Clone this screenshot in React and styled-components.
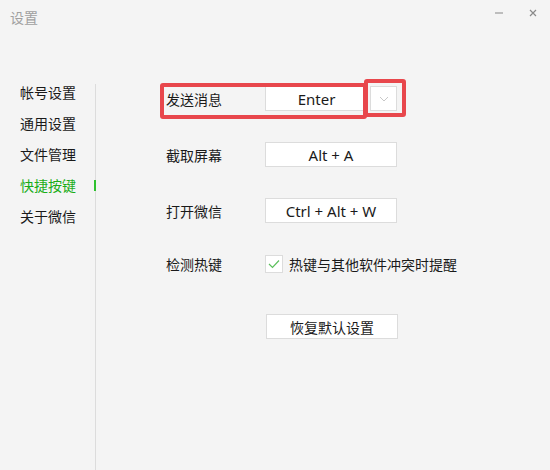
import React from "react";
import styled, { createGlobalStyle } from "styled-components";

const GlobalStyle = createGlobalStyle`
  html, body {
    margin: 0;
    padding: 0;
    background: #f4f4f4;
  }
  body {
    font-family: "Noto Sans", "Noto Sans CJK SC", sans-serif;
    font-size: 14px;
    color: #1a1a1a;
  }
`;

const MENU = ["帐号设置", "通用设置", "文件管理", "快捷按键", "关于微信"];

export default function App() {
  return (
    <>
      <GlobalStyle />
      <Window>
        <TitleBar>
          <Title>设置</Title>
          <Controls>
            <Minimize />
            <CloseButton>
              <svg width="8" height="8" viewBox="0 0 8 8">
                <path d="M1 1 L7 7 M7 1 L1 7" stroke="#8a8a8a" strokeWidth="1.2" />
              </svg>
            </CloseButton>
          </Controls>
        </TitleBar>
        <Body>
          <Sidebar>
            {MENU.map((name) => (
              <MenuItem key={name} $active={name === "快捷按键"}>
                {name}
              </MenuItem>
            ))}
          </Sidebar>
          <Main>
            <Row>
              <Label>发送消息</Label>
              <KeyBox $width={100} $shift={3}>Enter</KeyBox>
              <Dropdown>
                <svg width="10" height="6" viewBox="0 0 10 6">
                  <path d="M1 1 L5 5 L9 1" stroke="#c8c8c8" strokeWidth="1" fill="none" />
                </svg>
              </Dropdown>
              {/* red annotation frames drawn over the first row */}
              <Mark $left={-6} $top={-3} $w={207} $h={36} />
              <Mark $left={198} $top={-7} $w={42} $h={38} />
            </Row>
            <Row>
              <Label>截取屏幕</Label>
              <KeyBox>Alt + A</KeyBox>
            </Row>
            <Row>
              <Label>打开微信</Label>
              <KeyBox>Ctrl + Alt + W</KeyBox>
            </Row>
            <Row $top={28}>
              <Label>检测热键</Label>
              <Check>
                <svg width="12" height="10" viewBox="0 0 12 10">
                  <path d="M1 5 L4.5 8.5 L11 1.5" stroke="#5cbf5c" strokeWidth="1.2" fill="none" />
                </svg>
              </Check>
              <CheckText>热键与其他软件冲突时提醒</CheckText>
            </Row>
            <Row $top={38}>
              <Label />
              <ResetButton>恢复默认设置</ResetButton>
            </Row>
          </Main>
        </Body>
      </Window>
    </>
  );
}

const Window = styled.div`
  width: 550px;
  height: 470px;
  display: flex;
  flex-direction: column;
  overflow: hidden;
`;

const TitleBar = styled.div`
  height: 34px;
  display: flex;
  align-items: center;
  justify-content: space-between;
  padding: 0 13px 0 10px;
  flex-shrink: 0;
`;

const Title = styled.span`
  color: #a0a0a0;
  font-size: 14px;
  margin-top: -1px;
`;

const Controls = styled.div`
  display: flex;
  align-items: center;
  gap: 26px;
  margin-top: -8px;
`;

const Minimize = styled.span`
  width: 8px;
  height: 2px;
  background: #bdbdbd;
`;

const CloseButton = styled.span`
  display: flex;
  width: 8px;
  height: 8px;
`;

const Body = styled.div`
  flex: 1;
  display: flex;
  padding-top: 50px;
`;

const Sidebar = styled.div`
  width: 95px;
  border-right: 1px solid #dcdcdc;
  display: flex;
  flex-direction: column;
  gap: 14px;
`;

const MenuItem = styled.div`
  position: relative;
  height: 17px;
  line-height: 17px;
  padding-left: 20px;
  color: ${({ $active }) => ($active ? "#1aad19" : "#1a1a1a")};

  &::after {
    content: "";
    display: ${({ $active }) => ($active ? "block" : "none")};
    position: absolute;
    right: -1px;
    top: 3px;
    width: 2px;
    height: 11px;
    background: #2fc12f;
  }
`;

const Main = styled.div`
  flex: 1;
  padding: 2px 0 0 70px;
  display: flex;
  flex-direction: column;
  gap: 31px;
`;

const Row = styled.div`
  position: relative;
  display: flex;
  align-items: center;
  height: 25px;
  margin-top: ${({ $top }) => ($top ? `${$top - 31}px` : "0")};
`;

const Label = styled.span`
  width: 99px;
  flex-shrink: 0;
`;

const KeyBox = styled.div`
  box-sizing: border-box;
  width: ${({ $width }) => $width || 132}px;
  height: 25px;
  padding-left: ${({ $shift }) => $shift || 0}px;
  background: #fff;
  border: 1px solid #dcdcdc;
  display: flex;
  align-items: center;
  justify-content: center;
  font-size: 15px;
  color: #1a1a1a;
`;

const Dropdown = styled.div`
  box-sizing: border-box;
  width: 27px;
  height: 25px;
  margin-left: 5px;
  background: #fff;
  border: 1px solid #dcdcdc;
  display: flex;
  align-items: center;
  justify-content: center;
`;

const Mark = styled.div`
  position: absolute;
  box-sizing: border-box;
  left: ${({ $left }) => $left}px;
  top: ${({ $top }) => $top}px;
  width: ${({ $w }) => $w}px;
  height: ${({ $h }) => $h}px;
  border: 4px solid #e8474c;
  border-radius: 3px;
`;

const Check = styled.span`
  box-sizing: border-box;
  width: 18px;
  height: 18px;
  background: #fff;
  border: 1px solid #dcdcdc;
  display: flex;
  align-items: center;
  justify-content: center;
`;

const CheckText = styled.span`
  margin-left: 6px;
`;

const ResetButton = styled.button`
  box-sizing: border-box;
  width: 132px;
  height: 25px;
  margin-left: 1px;
  background: #fff;
  border: 1px solid #dcdcdc;
  font-family: inherit;
  font-size: 14px;
  color: #1a1a1a;
  padding: 0;
`;
